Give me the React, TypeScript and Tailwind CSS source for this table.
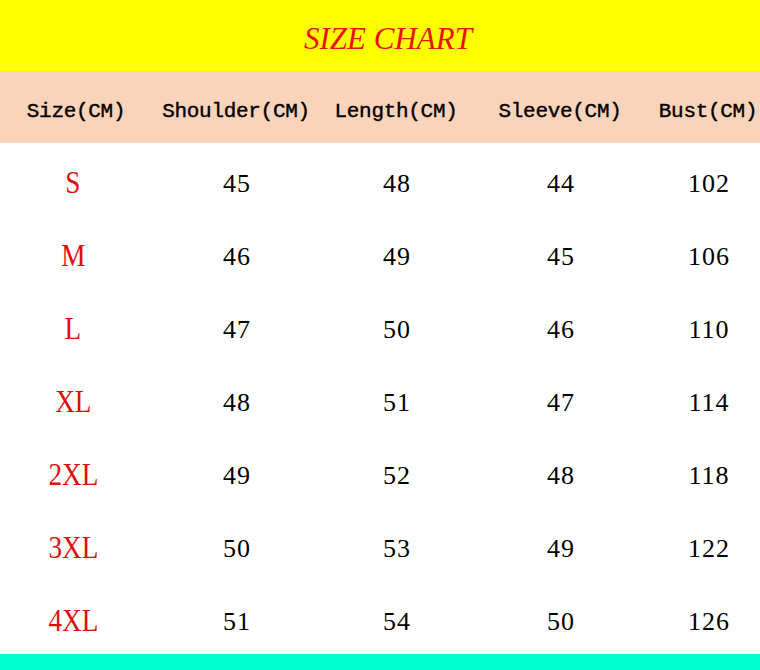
const headers = ["Size(CM)", "Shoulder(CM)", "Length(CM)", "Sleeve(CM)", "Bust(CM)"];

const rows = [
  ["S", "45", "48", "44", "102"],
  ["M", "46", "49", "45", "106"],
  ["L", "47", "50", "46", "110"],
  ["XL", "48", "51", "47", "114"],
  ["2XL", "49", "52", "48", "118"],
  ["3XL", "50", "53", "49", "122"],
  ["4XL", "51", "54", "50", "126"],
];

const cols = "grid grid-cols-[152px_168px_152px_176px_1fr]";

export default function App() {
  return (
    <div className="w-[760px] h-[670px] flex flex-col bg-white overflow-hidden">
      <div className="h-[71px] bg-[#ffff00] flex items-center justify-center pt-[8px]">
        <h1 className="font-['Liberation_Serif',serif] italic text-[31px] text-[#e8120c] pl-[16px]">
          SIZE CHART
        </h1>
      </div>
      <div className={`${cols} h-[72px] bg-[#f9d4bb] items-center pt-[10px]`}>
        {headers.map((h, i) => (
          <div
            key={h}
            className={`text-center font-['Liberation_Mono',monospace] text-[21px] text-black tracking-[-0.3px] [-webkit-text-stroke:0.4px_black] ${i === 4 ? "pl-[8px] whitespace-nowrap" : ""}`}
          >
            {h}
          </div>
        ))}
      </div>
      <div className="flex-1 flex flex-col">
        {rows.map((r) => (
          <div key={r[0]} className={`${cols} h-[73px] items-center pt-[6px]`}>
            {r.map((v, i) => (
              <div key={i} className={i === 4 ? "text-center pl-[10px]" : i === 0 ? "text-center pr-[6px]" : "text-center pl-[2px]"}>
                <span
                  className={
                    i === 0
                      ? "inline-block scale-x-[0.85] font-['Liberation_Serif',serif] text-[32px] text-[#e00d0d] leading-none"
                      : "inline-block mt-[4px] font-['Liberation_Serif',serif] text-[26px] text-black tracking-[1px] leading-none"
                  }
                >
                  {v}
                </span>
              </div>
            ))}
          </div>
        ))}
      </div>
      <div className="h-[16px] bg-[#00ffcc]" />
    </div>
  );
}
